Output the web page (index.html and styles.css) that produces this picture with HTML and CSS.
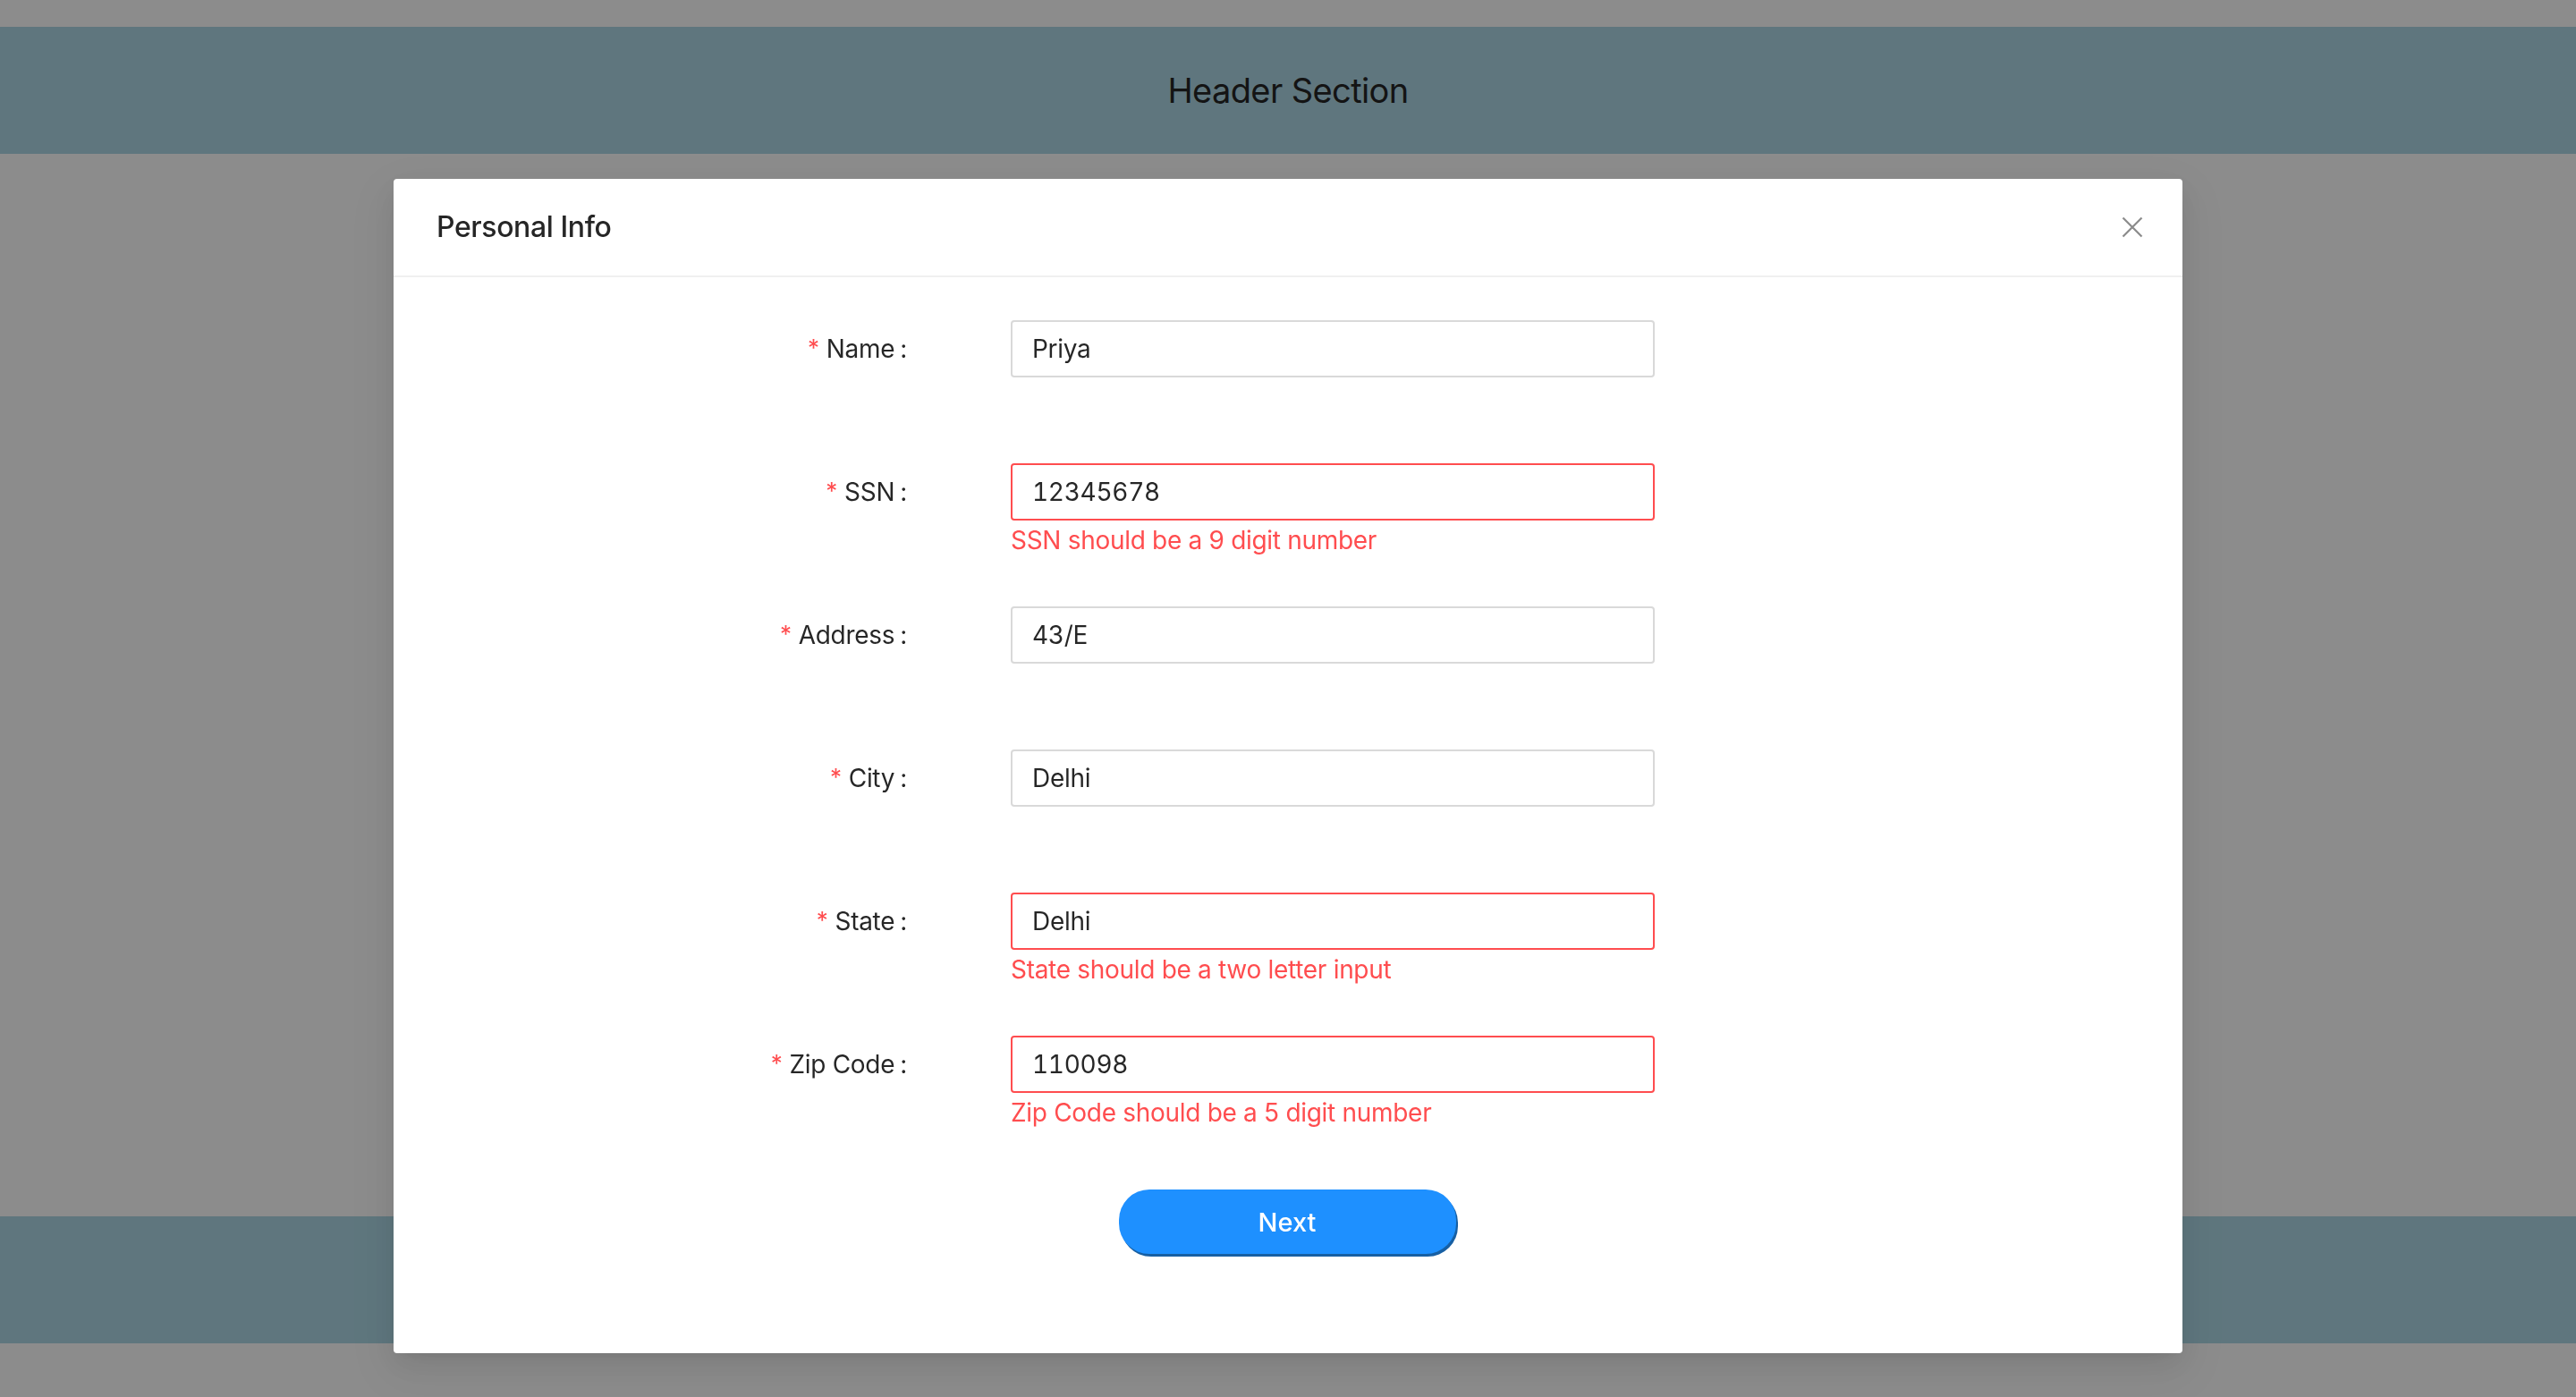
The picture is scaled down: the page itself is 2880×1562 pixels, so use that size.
FILE: index.html
```html
<!DOCTYPE html>
<html lang="en">
<head>
<meta charset="utf-8">
<title>Personal Info</title>
<link rel="stylesheet" href="styles.css">
</head>
<body>
<div class="page">
  <header class="site-header">Header Section</header>
  <main class="site-main"></main>
  <footer class="site-footer"></footer>
</div>

<div class="mask"></div>
<div class="modal-wrap">
  <div class="modal">
    <div class="modal-header">
      <div class="modal-title">Personal Info</div>
      <button class="modal-close" type="button" aria-label="Close">
        <svg viewBox="0 0 24 24" width="24" height="24"><path d="M1.5 1.5 L22.5 22.5 M22.5 1.5 L1.5 22.5" stroke="#8c8c8c" stroke-width="2.2" fill="none" stroke-linecap="butt"/></svg>
      </button>
    </div>
    <div class="modal-body">
      <form class="form">
        <div class="form-label"><label><span class="req">*</span>Name<span class="colon">:</span></label></div>
        <div class="form-control"><input class="input" value="Priya"></div>

        <div class="form-label"><label><span class="req">*</span>SSN<span class="colon">:</span></label></div>
        <div class="form-control"><input class="input input-error" value="12345678"><div class="explain">SSN should be a 9 digit number</div></div>

        <div class="form-label"><label><span class="req">*</span>Address<span class="colon">:</span></label></div>
        <div class="form-control"><input class="input" value="43/E"></div>

        <div class="form-label"><label><span class="req">*</span>City<span class="colon">:</span></label></div>
        <div class="form-control"><input class="input" value="Delhi"></div>

        <div class="form-label"><label><span class="req">*</span>State<span class="colon">:</span></label></div>
        <div class="form-control"><input class="input input-error" value="Delhi"><div class="explain">State should be a two letter input</div></div>

        <div class="form-label"><label><span class="req">*</span>Zip Code<span class="colon">:</span></label></div>
        <div class="form-control"><input class="input input-error" value="110098"><div class="explain">Zip Code should be a 5 digit number</div></div>
      </form>
      <div class="actions"><button class="btn-next" type="button">Next</button></div>
    </div>
  </div>
</div>
</body>
</html>
```

FILE: styles.css
```css
* { box-sizing: border-box; }

html, body {
  margin: 0;
  padding: 0;
  background: #ffffff;
  font-family: Inter, "Liberation Sans", sans-serif;
  color: rgba(0, 0, 0, 0.85);
}

.page {
  padding-top: 30px;
  padding-bottom: 60px;
}

.site-header {
  height: 142px;
  background: #add8e6;
  display: flex;
  align-items: center;
  justify-content: center;
  font-size: 38px;
  letter-spacing: -0.6px;
  color: #262626;
}

.site-main {
  height: 1188px;
}

.site-footer {
  height: 142px;
  background: #add8e6;
}

.mask {
  position: fixed;
  inset: 0;
  background: rgba(0, 0, 0, 0.45);
}

.modal-wrap {
  position: fixed;
  inset: 0;
  display: flex;
  justify-content: center;
  align-items: flex-start;
  padding-top: 200px;
}

.modal {
  width: 2000px;
  background: #ffffff;
  border-radius: 4px;
  box-shadow: 0 6px 12px -8px rgba(0, 0, 0, 0.12),
              0 12px 32px 0 rgba(0, 0, 0, 0.08),
              0 18px 56px 16px rgba(0, 0, 0, 0.05);
}

.modal-header {
  display: flex;
  align-items: center;
  justify-content: space-between;
  height: 110px;
  padding: 0 44px 0 48px;
  border-bottom: 2px solid #f0f0f0;
}

.modal-title {
  font-size: 32px;
  font-weight: 500;
  line-height: 44px;
  letter-spacing: -0.4px;
  color: #262626;
}

.modal-close {
  border: 0;
  background: transparent;
  padding: 0;
  width: 24px;
  height: 24px;
  display: flex;
  cursor: pointer;
}

.modal-body {
  padding: 48px 48px 108px;
}

.form {
  display: grid;
  grid-template-columns: 642px 720px;
  row-gap: 48px;
}

.form-label {
  height: 64px;
  display: flex;
  align-items: center;
  justify-content: flex-end;
  padding-right: 116px;
  font-size: 28px;
  letter-spacing: -0.3px;
  color: rgba(0, 0, 0, 0.85);
}

.req {
  color: #ff4d4f;
  margin-right: 8px;
  font-size: 26px;
  position: relative;
  top: -2px;
}

.colon {
  margin-left: 6px;
}

.form-control {
  min-height: 112px;
}

.input {
  display: block;
  width: 720px;
  height: 64px;
  border: 2px solid #d9d9d9;
  border-radius: 4px;
  padding: 0 22px;
  font-family: inherit;
  font-size: 28px;
  letter-spacing: -0.3px;
  font-feature-settings: "tnum" 1;
  color: rgba(0, 0, 0, 0.85);
  background: #fff;
  outline: none;
}

.input-error {
  border-color: #ff4d4f;
}

.explain {
  font-size: 28px;
  line-height: 44px;
  letter-spacing: -0.3px;
  color: #ff4d4f;
}

.actions {
  display: flex;
  justify-content: center;
  margin-top: 60px;
}

.btn-next {
  width: 377px;
  height: 72px;
  margin-right: 2px;
  margin-bottom: 3px;
  border: 0;
  border-radius: 34px;
  background: #1e90ff;
  box-shadow: 2px 3px 0 #175fa3;
  color: #ffffff;
  font-family: inherit;
  font-size: 29px;
  font-weight: 500;
  cursor: pointer;
}
```
